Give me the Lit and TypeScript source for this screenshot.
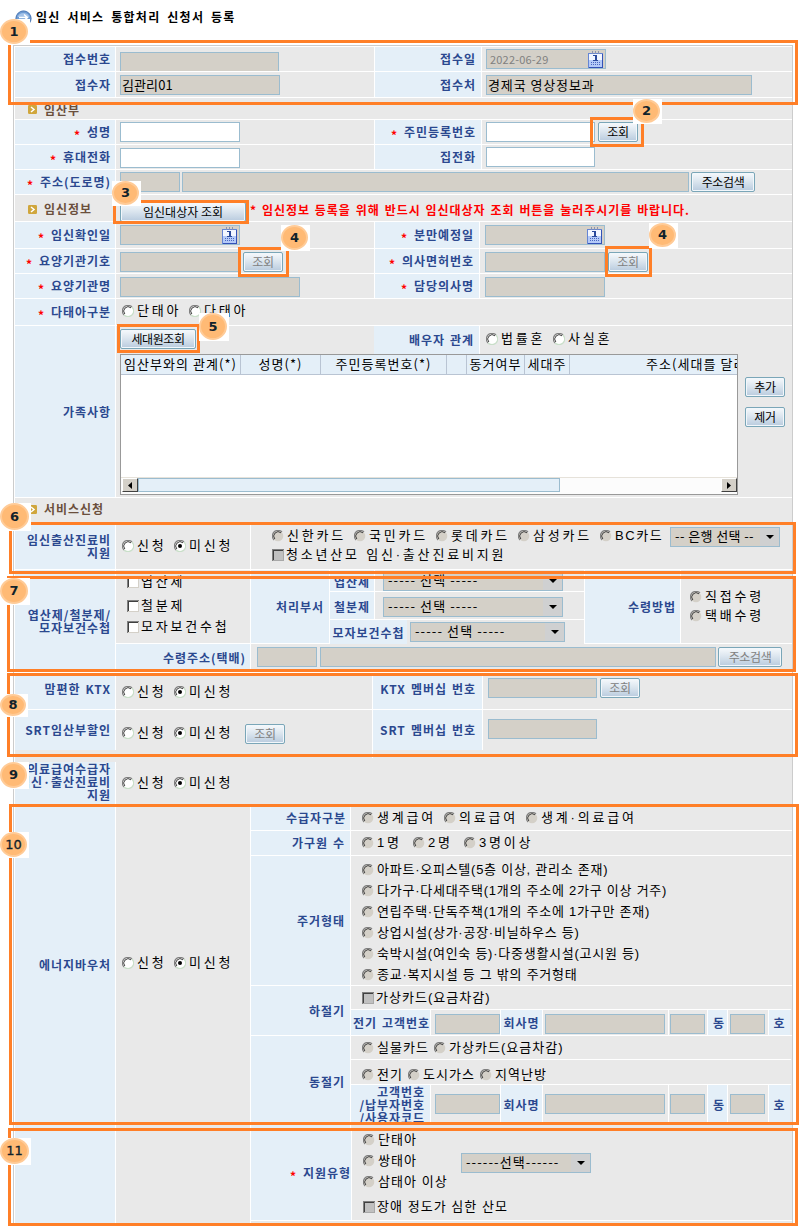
import { LitElement, html, svg, css, unsafeCSS, nothing } from "lit";
import { customElement } from "lit/decorators.js";

// Spacing scale: w = width, h = height, x = left margin, y = top margin.
const scale = (name: string, prop: string, max: number) =>
  Array.from({ length: max + 1 }, (_, i) => `.${name}${i}{${prop}:${i}px}`).join("");
const utilities = unsafeCSS(
  scale("w", "width", 700) + scale("h", "height", 440) + scale("x", "margin-left", 180) + scale("y", "margin-top", 170)
);

const field = (cls: string, value = "") => html`<div class="field ${cls}">${value}</div>`;
const btn = (cls: string, text: string) => html`<div class="btn ${cls}"><span>${text}</span></div>`;
const star = html`<span class="star">*</span>`;

const radioIcon = (state: string) => html`<svg class="ic" width="12" height="12" viewBox="0 0 12 12">
  <circle cx="6" cy="6" r="5.3" fill=${state === "off" ? "#d4d0c8" : "#fff"} />
  <path d="M2 10A5.4 5.4 0 0 1 10 2" fill="none" stroke="#808080" stroke-width="1.2" />
  <path d="M2.8 9A4.4 4.4 0 0 1 9 2.8" fill="none" stroke="#404040" stroke-width="1" />
  ${state === "off" ? nothing : svg`<path d="M10 2A5.4 5.4 0 0 1 2 10" fill="none" stroke="#c9dfc9" stroke-width="1.1" />`}
  ${state === "on" ? svg`<circle cx="6" cy="6" r="2" fill="#000" />` : nothing}
</svg>`;

const checkIcon = (state: string) => html`<svg class="ic" width="12" height="12" viewBox="0 0 12 12" shape-rendering="crispEdges">
  <rect width="12" height="12" fill=${state === "off" ? "#c0c0c0" : "#fff"} />
  <path d="M0.5 12V0.5H12" fill="none" stroke="#808080" />
  <path d="M1.5 11V1.5H11" fill="none" stroke="#404040" />
  <path d="M1 11.5H11.5V1" fill="none" stroke=${state === "off" ? "#a8a8a8" : "#d4d0c8"} />
</svg>`;

const radio = (cls: string, text: string, state = "") => html`<label class="opt ${cls}">${radioIcon(state)}<span>${text}</span></label>`;
const check = (cls: string, text: string, state = "") => html`<label class="opt chk ${cls}">${checkIcon(state)}<span>${text}</span></label>`;
const select = (cls: string, text: string) => html`<div class="select ${cls}"><span class="seltext">${text}</span><span class="arrow"><svg width="8" height="4" viewBox="0 0 8 4"><path d="M0 0H8L4 4Z" /></svg></span></div>`;

const calendar = html`<svg class="cal" width="15" height="17" viewBox="0 0 15 17" shape-rendering="crispEdges">
  <rect x="0.5" y="2.5" width="14" height="14" fill="#b4caf8" stroke="#6585d4" />
  <rect x="1" y="3" width="13" height="6" fill="#f2f6ff" />
  <path d="M14.5 3V16.5H1" fill="none" stroke="#3351b8" />
  <path d="M4.500 0V3M7.500 0V3M10.500 0V3" stroke="#8a93b0" />
  <path d="M5 4H9V9H10V10H5V9H7V5H5Z" fill="#2b4a9c" />
  <path d="M3 11.500H12M3 13.500H12" stroke="#4a67c0" stroke-dasharray="1 1" />
</svg>`;
const dateField = (cls: string, value = "") => html`<div class="field date ${cls}"><span>${value}</span>${calendar}</div>`;

const bullet = html`<svg width="9" height="9" viewBox="0 0 9 9"><rect width="9" height="9" rx="1.2" fill="#d0a63c" /><path d="M3 2L6 4.500L3 7" fill="none" stroke="#fff" stroke-width="1.500" /></svg>`;
const heading = (cls: string, text: string, rest: unknown = nothing) =>
  html`<div class="row ${cls}"><div class="head">${bullet}<span>${text}</span></div>${rest}</div>`;

const applyPair = (cls: string) => html`${radio(`x6 w52 s ${cls}`, "신청")}${radio(`w60 s ${cls}`, "미신청", "on")}`;

interface Pair { h: string; left: unknown; a: unknown; right: unknown; b: unknown; narrow?: boolean }
const pair = ({ h, left, a, right, b, narrow }: Pair) => html`<div class="row ${h}">
  <div class="label w101">${left}</div>
  <div class="cell w259">${a}</div>
  <div class="label ${narrow ? "w105" : "w107"} r">${right}</div>
  <div class="cell last">${b}</div>
</div>`;

// Numbered callouts: [number, left, top, width, height]
const BADGES: [number, number, number, number, number][] = [
  [1, 0, 19, 30, 26], [2, 633, 99, 29, 25], [3, 112, 181, 29, 25], [4, 281, 225, 29, 26], [4, 649, 223, 29, 25],
  [5, 199, 313, 30, 28], [6, 0, 503, 31, 28], [7, 0, 578, 30, 27], [8, 0, 694, 28, 23], [9, 0, 762, 29, 27],
  [10, 0, 832, 29, 26], [11, 0, 1138, 31, 27],
];
// Callout outlines: [left, top, width, height]
const FRAMES: [number, number, number, number][] = [
  [8, 40, 790, 65], [590, 117, 54, 30], [113, 200, 136, 24], [238, 247, 51, 30], [605, 246, 47, 31], [117, 324, 83, 29],
  [9, 522, 787, 52], [7, 576, 789, 96], [7, 673, 791, 84], [9, 804, 790, 321], [8, 1128, 790, 98],
];
const box = (l: number, t: number, w: number, h: number) => `left:${l}px;top:${t}px;width:${w}px;height:${h}px`;

const HOUSING = [
  "아파트·오피스텔(5층 이상, 관리소 존재)",
  "다가구·다세대주택(1개의 주소에 2가구 이상 거주)",
  "연립주택·단독주책(1개의 주소에 1가구만 존재)",
  "상업시설(상가·공장·비닐하우스 등)",
  "숙박시설(여인숙 등)·다중생활시설(고시원 등)",
  "종교·복지시설 등 그 밖의 주거형태",
];

@customElement("app-root")
export class AppRoot extends LitElement {
  static styles = [
    css`
      :host { display: block; position: relative; width: 810px; height: 1226px; overflow: hidden; background: #fff; color: #000;
        font-family: "Noto Sans CJK KR", sans-serif; font-size: 13px; line-height: 14px; white-space: nowrap; }
      * { box-sizing: border-box; }
      svg { display: block; flex: none; }
      .title { height: 45px; display: flex; padding: 10px 0 0 15px; font-size: 12px; font-weight: 700; letter-spacing: 1.3px; word-spacing: 2.7px; }
      .title span { margin: 0 0 0 4px; }
      .form { width: 780px; margin-left: 13px; height: 1181px; border: 1px solid #ccc; border-bottom: 0; padding: 1px 0 0 1px; background: #fff; }
      .row { display: flex; width: 777px; flex: none; background: #e9e9e9; border-bottom: 1px solid #fff; }
      .row.plain { border-bottom: 0; }
      .cell { display: flex; align-items: flex-start; background: #e9e9e9; border-right: 1px solid #fff; flex: none; overflow: hidden; }
      .cell.last { flex: 1; border-right: 0; width: 0; }
      .cell > *, .stack > * { flex: none; }
      .col { flex-direction: column; }
      .stack { display: flex; flex-direction: column; flex: none; }
      .label { flex: none; display: flex; align-items: center; justify-content: flex-end; background: #e4eff8; border-right: 1px solid #fff;
        padding: 0 4px 1px 0; color: #2b488f; font-size: 12px; font-weight: 700; letter-spacing: 0.96px; word-spacing: 1.4px; text-align: right; line-height: 13px; overflow: hidden; }
      .label.r { padding-right: 5px; }
      .label.r6 { padding-right: 6px; }
      .label.edge { padding-right: 0; }
      .label.up { padding-bottom: 5px; }
      .label.mid { justify-content: center; padding: 0; }
      .label.off2 { padding-left: 3px; }
      .label.top { align-items: flex-start; }
      .label.flush { align-items: flex-start; padding-bottom: 0; }
      .label.nb, .cell.nb { border-right: 0; }
      .cell.line { border-bottom: 1px solid #fff; }
      .star { color: #f00; width: 6px; margin-right: 7px; position: relative; top: 3px; letter-spacing: 0; flex: none; }
      .head { display: flex; align-items: center; width: 104px; padding-left: 13px; color: #6b4f3c; font-size: 12px; font-weight: 700; letter-spacing: 0.96px; }
      .head span { margin-left: 7px; }
      .headup .head { padding-bottom: 3px; }
      .headdown .head { padding-top: 2px; }
      .notice { color: #f00; font-size: 12px; font-weight: 700; letter-spacing: 0.94px; word-spacing: 1.3px; }
      .field { height: 20px; border: 1px solid #9bbccf; background: #d4d0c8; padding: 1px 0 0 1px; line-height: 16px; letter-spacing: 0.9px; }
      .field.tight { letter-spacing: 0.1px; }
      .field.edit { background: #fff; }
      .field.date { display: flex; justify-content: space-between; padding: 1px 2px 0 3px; color: #808080; font-size: 11px; letter-spacing: 0.2px; }
      .btn { height: 20px; border: 1px solid #7aa6b8; border-radius: 2px; background: linear-gradient(#f6f9fc, #dce6ef 45%, #b9cbde); box-shadow: inset 0 0 0 1px #f2f7fb;
        display: flex; justify-content: center; align-items: center; font-size: 12px; letter-spacing: -0.4px; padding-bottom: 1px; line-height: 14px; }
      .btn.dis { color: #808080; }
      .btn.loose { letter-spacing: 0; }
      .opt { display: flex; align-items: center; height: 14px; letter-spacing: 1.04px; word-spacing: 0; font-family: "Liberation Sans", "Noto Sans CJK KR", sans-serif; }
      .opt span { margin-left: 3px; }
      .opt.chk span { margin-left: 2px; }
      .opt.house { letter-spacing: 0.75px; }
      .opt.s { letter-spacing: 2.8px; }
      .opt.bc { letter-spacing: 1.6px; }
      .select { height: 20px; border: 1px solid #9bbccf; background: #d4d0c8; display: flex; letter-spacing: 1.1px; font-size: 13px; }
      .select.bank { letter-spacing: 0.4px; }
      .seltext { flex: 1; padding-left: 4px; line-height: 16px; overflow: hidden; }
      .arrow { width: 19px; background: #cfd0d1; display: flex; align-items: center; justify-content: center; }
      .grid { width: 618px; height: 141px; border: 1px solid #999; background: #fff; display: flex; flex-direction: column; }
      .ghead { display: flex; height: 20px; background: #e4eff8; border-bottom: 1px solid #b9c4d3; overflow: hidden; flex: none; }
      .ghead div { flex: none; border-right: 1px solid #b9c4d3; text-align: center; letter-spacing: 1.04px; line-height: 17px; overflow: hidden; }
      .ghead div.end { border: 0; padding-left: 76px; text-align: left; }
      .gbody { flex: 1; }
      .bar { display: flex; height: 17px; border-top: 1px solid #e6e2da; padding-left: 1px; background: #fcfcfc; flex: none; }
      .bar .ar { width: 16px; height: 14px; background: #d4d0c8; border: 1px solid #fff; border-right-color: #404040; border-bottom-color: #404040; display: flex; align-items: center; justify-content: center; }
      .thumb { width: 422px; height: 14px; background: #e4eff8; border: 1px solid #9bbccf; }
      .fill { flex: 1; }
      .frame { position: absolute; border: 3px solid #ff7f27; }
      .badge { position: absolute; background: #fff; display: flex; }
      .dot { flex: 1; margin: 0 2px 1px 0; border-radius: 50%; background: #ffba75; border: 2px solid #ffcb97; display: flex; align-items: center; justify-content: center;
        font: 700 13px/14px "DejaVu Sans", sans-serif; color: #10222b; }
      .dot.two { font-weight: 400; font-size: 13px; -webkit-text-stroke: 0.3px #10222b; }
    `,
    utilities,
  ];

  private meter(cls: string, y: string, labelCls: string, first: unknown) {
    return html`<div class="row plain ${cls}">
      <div class="label w80 ${labelCls}">${first}</div>
      <div class="cell w70">${field(`x4 w65 ${y}`)}</div>
      <div class="label mid w42">회사명</div>
      <div class="cell w126">${field(`x2 w120 ${y}`)}</div>
      <div class="cell w39">${field(`x1 w35 ${y}`)}</div>
      <div class="label mid off2 w20">동</div>
      <div class="cell w41">${field(`x2 w35 ${y}`)}</div>
      <div class="label mid nb w21">호</div>
    </div>`;
  }

  render() {
    return html`
      <div class="title">
        <svg width="17" height="17" viewBox="0 0 17 17"><circle cx="8.500" cy="8.500" r="7.600" fill="#6d9bd3" stroke="#4673b2" /><path d="M2.500 7A6.500 6.500 0 0 1 14.500 7Z" fill="#a3c2e8" /><path d="M4 7.500H12M9 4.500L12.500 7.500L9 10.500" fill="none" stroke="#fff" stroke-width="1.500" /></svg>
        <span>임신 서비스 통합처리 신청서 등록</span>
      </div>
      <div class="form">
        ${pair({ h: "h25", left: "접수번호", a: field("x4 y5 w159"), right: "접수일", b: dateField("x4 y2 w120", "2022-06-29") })}
        ${pair({ h: "h26", left: "접수자", a: field("x4 y3 w160 tight", "김관리01"), right: "접수처", b: field("x4 y3 w266", "경제국 영상정보과") })}
        ${heading("h22 headdown", "임산부")}
        ${pair({ h: "h25", left: html`${star}성명`, a: field("edit x4 y2 w120"), right: html`${star}주민등록번호`, b: html`${field("edit x4 y2 w109")}${btn("x3 y2 w40", "조회")}` })}
        ${pair({ h: "h25", left: html`${star}휴대전화`, a: field("edit x4 y3 w120"), right: "집전화", b: field("edit x4 y2 w109") })}
        <div class="row h25">
          <div class="label w101">${star}주소(도로명)</div>
          <div class="cell last">${field("x4 y2 w60")}${field("x2 y2 w507")}${btn("x2 y2 w64", "주소검색")}</div>
        </div>
        ${heading("h27 headdown", "임신정보", html`${btn("loose y7 w126 x1", "임신대상자 조회")}<span class="notice x4 y8">* 임신정보 등록을 위해 반드시 임신대상자 조회 버튼을 눌러주시기를 바랍니다.</span>`)}
        ${pair({ h: "h27", narrow: true, left: html`${star}임신확인일`, a: dateField("x4 y3 w120"), right: html`${star}분만예정일`, b: dateField("x5 y3 w120") })}
        ${pair({ h: "h25", narrow: true, left: html`${star}요양기관기호`, a: html`${field("x4 y3 w120")}${btn("dis x3 y3 w40", "조회")}`, right: html`${star}의사면허번호`, b: html`${field("x5 y3 w120")}${btn("dis x3 y3 w40", "조회")}` })}
        ${pair({ h: "h25", narrow: true, left: html`${star}요양기관명`, a: field("x4 y3 w180"), right: html`${star}담당의사명`, b: field("x5 y3 w120") })}
        <div class="row h27">
          <div class="label w101">${star}다태아구분</div>
          <div class="cell last">${radio("s x6 y5 w67", "단태아")}${radio("s y5 w70", "다태아")}</div>
        </div>
        <div class="row h172">
          <div class="label w101">가족사항</div>
          <div class="stack w622">
            <div class="cell nb h28">
              ${btn("x4 y3 w76", "세대원조회")}
              <div class="label w106 r h28 x178">배우자 관계</div>
              ${radio("s x6 y6 w67", "법률혼")}${radio("s y6 w60", "사실혼")}
            </div>
            <div class="grid x4">
              <div class="ghead">
                <div class="w120">임산부와의 관계(*)</div><div class="w80">성명(*)</div><div class="w126">주민등록번호(*)</div><div class="w20"></div>
                <div class="w58">동거여부</div><div class="w45">세대주</div><div class="end w167">주소(세대를 달리</div>
              </div>
              <div class="gbody"></div>
              <div class="bar">
                <div class="ar"><svg width="4" height="7" viewBox="0 0 4 7"><path d="M4 0V7L0 3.500Z" /></svg></div>
                <div class="thumb"></div><div class="fill"></div>
                <div class="ar"><svg width="4" height="7" viewBox="0 0 4 7"><path d="M0 0V7L4 3.500Z" /></svg></div>
              </div>
            </div>
          </div>
          <div class="stack x7">${btn("w40 y51", "추가")}${btn("w40 y10", "제거")}</div>
        </div>
        ${heading("h26 headup", "서비스신청")}
        <div class="row h46">
          <div class="label w101">임신출산진료비<br />지원</div>
          <div class="cell w135">${applyPair("y15")}</div>
          <div class="cell last col">
            <div class="cell nb h23">
              ${radio("off s x21 y5 w82", "신한카드", "off")}${radio("s y5 w82", "국민카드", "off")}${radio("s y5 w82", "롯데카드", "off")}${radio("s y5 w82", "삼성카드", "off")}${radio("bc y5 w70", "BC카드", "off")}${select("bank y3 w110", "-- 은행 선택 --")}
            </div>
            ${check("s x21 y1", "청소년산모 임신·출산진료비지원", "off")}
          </div>
        </div>
        <div class="row h103">
          <div class="label w101">엽산제/철분제/<br />모자보건수첩</div>
          <div class="stack fill">
            <div class="row w676 h74">
              <div class="cell w135"><div class="stack x11">${check("s y5", "엽산제")}${check("s y10", "철분제")}${check("s y7", "모자보건수첩")}</div></div>
              <div class="label w79 r">처리부서</div>
              <div class="stack w255">
                <div class="cell h22 line"><div class="label w45 h22 mid">엽산제</div>${select("x8 y1 w180", "----- 선택 -----")}</div>
                <div class="cell h28 line"><div class="label w45 h28 mid">철분제</div>${select("x8 y5 w180", "----- 선택 -----")}</div>
                <div class="cell h24"><div class="label w77 h24 mid nb">모자보건수첩</div>${select("x3 y2 w155", "----- 선택 -----")}</div>
              </div>
              <div class="label w96">수령방법</div>
              <div class="cell last"><div class="stack x9">${radio("s y20", "직접수령", "off")}${radio("s y5", "택배수령", "off")}</div></div>
            </div>
            <div class="cell nb h28">
              <div class="label w135 h28">수령주소(택배)</div>${field("x6 y3 w60")}${field("x3 y3 w396")}${btn("dis x2 y3 w64", "주소검색")}
            </div>
          </div>
        </div>
        <div class="row h37">
          <div class="label w101 up">맘편한 KTX</div>
          <div class="cell w257">${applyPair("y12")}</div>
          <div class="label w110 r6 up">KTX 멤버십 번호</div>
          <div class="cell last">${field("x5 y5 w109")}${btn("dis x3 y5 w40", "조회")}</div>
        </div>
        <div class="row plain h48">
          <div class="label w101 h40">SRT임산부할인</div>
          <div class="cell h48 w257">${applyPair("y16")}${btn("dis x11 y14 w40", "조회")}</div>
          <div class="label w110 h40 r6">SRT 멤버십 번호</div>
          <div class="cell last">${field("x5 y9 w109")}</div>
        </div>
        <div class="row plain h47">
          <div class="label w101 h43 y4 up">의료급여수급자<br />임신·출산진료비<br />지원</div>
          <div class="cell last">${applyPair("y18")}</div>
        </div>
        <div class="row plain h421">
          <div class="label w101 top"><span class="y153">에너지바우처</span></div>
          <div class="cell w135">${applyPair("y151")}</div>
          <div class="stack fill">
            <div class="row w541 h26">
              <div class="label w100">수급자구분</div>
              <div class="cell last">${radio("s x11 y6 w82", "생계급여", "off")}${radio("s y6 w82", "의료급여", "off")}${radio("s y6 w120", "생계·의료급여", "off")}</div>
            </div>
            <div class="row w541 h25">
              <div class="label w100 r">가구원 수</div>
              <div class="cell last">${radio("s x11 y5 w51", "1명", "off")}${radio("s y5 w51", "2명", "off")}${radio("s y5 w90", "3명이상", "off")}</div>
            </div>
            <div class="row w541 h130">
              <div class="label w100 r">주거형태</div>
              <div class="cell last"><div class="stack x11">${HOUSING.map((t) => radio("house y7", t, "off"))}</div></div>
            </div>
            <div class="row w541 h50">
              <div class="label w100 r">하절기</div>
              <div class="stack fill">
                <div class="row w440 h24"><div class="cell last">${check("x11 y5", "가상카드(요금차감)", "off")}</div></div>
                ${this.meter("w439 h25", "y4", "edge", "전기 고객번호")}
              </div>
            </div>
            <div class="row w541 h93">
              <div class="label w100 r">동절기</div>
              <div class="stack fill">
                <div class="row w440 h24"><div class="cell last">${radio("x11 y5 w72", "실물카드", "off")}${radio("y5 w120", "가상카드(요금차감)", "off")}</div></div>
                <div class="row w440 h25"><div class="cell last">${radio("x11 y8 w46", "전기", "off")}${radio("y8 w72", "도시가스", "off")}${radio("y8 w70", "지역난방", "off")}</div></div>
                ${this.meter("w439 h39", "y9", "r flush", html`고객번호<br />/납부자번호<br />/사용자코드`)}
              </div>
            </div>
            <div class="row w541 h92">
              <div class="label w101 edge up">${star}지원유형</div>
              <div class="cell last">
                <div class="stack x11 w98">${radio("y4", "단태아", "off")}${radio("y7", "쌍태아", "off")}${radio("y7", "삼태아 이상", "off")}${check("y11", "장애 정도가 심한 산모", "off")}</div>
                ${select("y24 w130", "------선택------")}
              </div>
            </div>
          </div>
        </div>
      </div>
      ${FRAMES.map((f) => html`<div class="frame" style=${box(...f)}></div>`)}
      ${BADGES.map(([n, l, t, w, h]) => html`<div class="badge" style=${box(l, t, w, h)}><div class="dot ${n > 9 ? "two" : ""}">${n}</div></div>`)}
    `;
  }
}
